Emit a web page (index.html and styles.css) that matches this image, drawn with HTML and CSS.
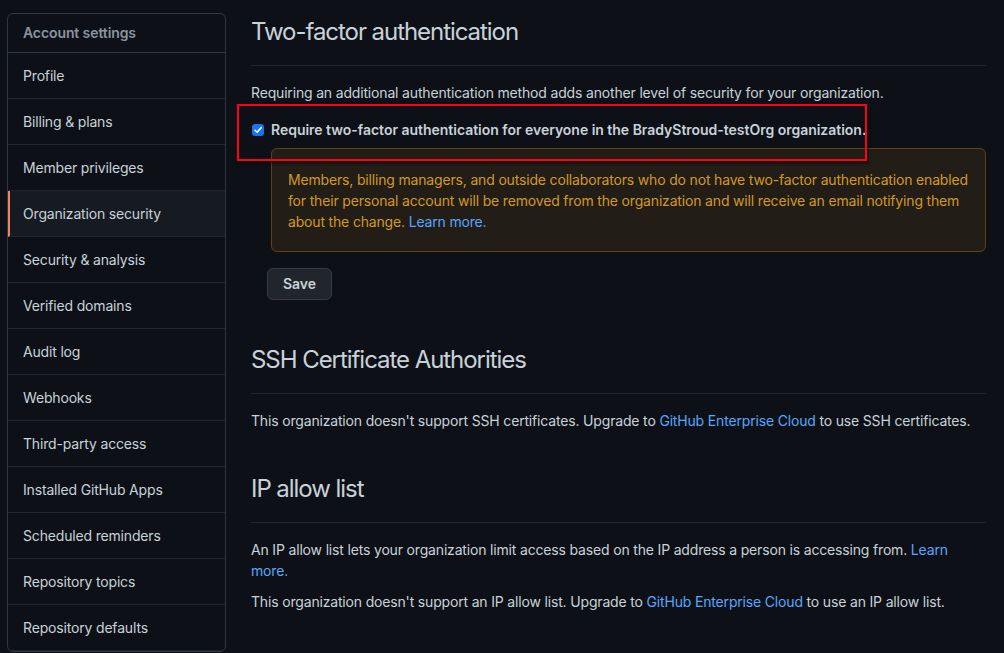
FILE: index.html
```html
<!DOCTYPE html>
<html lang="en">
<head>
<meta charset="utf-8">
<title>Organization security</title>
<link rel="stylesheet" href="styles.css">
</head>
<body>
<div class="page">
  <nav class="menu">
    <div class="menu-heading">Account settings</div>
    <a class="menu-item">Profile</a>
    <a class="menu-item">Billing &amp; plans</a>
    <a class="menu-item">Member privileges</a>
    <a class="menu-item selected">Organization security</a>
    <a class="menu-item">Security &amp; analysis</a>
    <a class="menu-item">Verified domains</a>
    <a class="menu-item">Audit log</a>
    <a class="menu-item">Webhooks</a>
    <a class="menu-item">Third-party access</a>
    <a class="menu-item">Installed GitHub Apps</a>
    <a class="menu-item">Scheduled reminders</a>
    <a class="menu-item">Repository topics</a>
    <a class="menu-item">Repository defaults</a>
  </nav>
  <main class="main">
    <section class="section first">
      <h2 class="subhead">Two-factor authentication</h2>
      <p class="text">Requiring an additional authentication method adds another level of security for your organization.</p>
      <div class="check-row">
        <span class="checkbox"><svg viewBox="0 0 12 12" width="12" height="12"><path d="M3 6.2 L5.1 8.3 L9.2 3.6" fill="none" stroke="#fff" stroke-width="1.6" stroke-linecap="round" stroke-linejoin="round"/></svg></span>
        <label class="check-label">Require two-factor authentication for everyone in the BradyStroud-testOrg organization.</label>
        <div class="annotation"></div>
      </div>
      <div class="flash-warn">Members, billing managers, and outside collaborators who do not have two-factor authentication enabled<br>for their personal account will be removed from the organization and will receive an email notifying them<br>about the change. <a class="link">Learn more.</a></div>
      <button class="btn">Save</button>
    </section>
    <section class="section ssh">
      <h2 class="subhead">SSH Certificate Authorities</h2>
      <p class="text nowrap">This organization doesn't support SSH certificates. Upgrade to <a class="link">GitHub Enterprise Cloud</a> to use SSH certificates.</p>
    </section>
    <section class="section ip">
      <h2 class="subhead">IP allow list</h2>
      <p class="text">An IP allow list lets your organization limit access based on the IP address a person is accessing from. <a class="link">Learn<br>more.</a></p>
      <p class="text second">This organization doesn't support an IP allow list. Upgrade to <a class="link">GitHub Enterprise Cloud</a> to use an IP allow list.</p>
    </section>
  </main>
</div>
</body>
</html>
```

FILE: styles.css
```css
* { box-sizing: border-box; }
html, body {
  margin: 0;
  background: #0d1117;
  color: #c9d1d9;
  font-family: Inter, "Noto Sans", "Liberation Sans", sans-serif;
  font-size: 14px;
  line-height: 21px;
  letter-spacing: -0.17px;
}
.page {
  display: flex;
  align-items: flex-start;
  gap: 25px;
  padding: 13px 0 0 7px;
  height: 653px;
  overflow: hidden;
}
.menu {
  flex: 0 0 219px;
  display: flex;
  flex-direction: column;
  border: 1px solid #30363d;
  border-radius: 6px;
  overflow: hidden;
}
.menu-heading {
  padding: 8px 15px;
  font-weight: 600;
  color: #8b949e;
  border-bottom: 1px solid #30363d;
  height: 39px;
  letter-spacing: -0.1px;
}
.menu-item {
  display: block;
  height: 46px;
  padding: 12px 15px;
  border-bottom: 1px solid #21262d;
  color: #c9d1d9;
  text-decoration: none;
}
.menu-item.selected {
  background: #161b22;
  border-left: 2px solid #f78166;
  padding-left: 13px;
}
.main {
  flex: 0 0 735px;
}
.subhead {
  margin: 0;
  font-size: 24px;
  line-height: 36px;
  font-weight: 400;
  letter-spacing: -1.05px;
  color: #c9d1d9;
  padding-bottom: 15px;
  border-bottom: 1px solid #21262d;
}
.section.first .subhead { margin-top: 1px; }
.text {
  margin: 16px 0 0;
}
.text.nowrap { white-space: nowrap; }
.text.second { margin-top: 10px; }
.check-row {
  position: relative;
  display: flex;
  align-items: center;
  gap: 7px;
  margin-top: 16px;
  height: 21px;
}
.checkbox {
  display: flex;
  align-items: center;
  justify-content: center;
  width: 12px;
  height: 12px;
  margin-left: 1px;
  background: #1a73e8;
  border-radius: 3px;
}
.check-label {
  font-weight: 600;
  color: #c9d1d9;
  letter-spacing: -0.02px;
}
.annotation {
  position: absolute;
  left: -14px;
  top: -15px;
  width: 630px;
  height: 57px;
  border: 2px solid #ff0018;
  box-shadow: 1px 2px 3px rgba(0, 0, 0, 0.6);
  pointer-events: none;
  z-index: 2;
}
.flash-warn {
  margin: 8px 0 0 20px;
  padding: 20px 16px 19px;
  border: 1px solid #5e4214;
  border-radius: 6px;
  background: #221d17;
  color: #d29922;
  white-space: nowrap;
}
.link {
  color: #58a6ff;
  text-decoration: none;
}
.btn {
  display: block;
  margin: 16px 0 0 16px;
  width: 65px;
  height: 32px;
  padding: 0;
  background: #21262d;
  border: 1px solid #363b42;
  border-radius: 6px;
  color: #c9d1d9;
  font-family: inherit;
  font-size: 14px;
  font-weight: 600;
  line-height: 20px;
}
.section.ssh { margin-top: 42px; }
.section.ip { margin-top: 40px; }
```
